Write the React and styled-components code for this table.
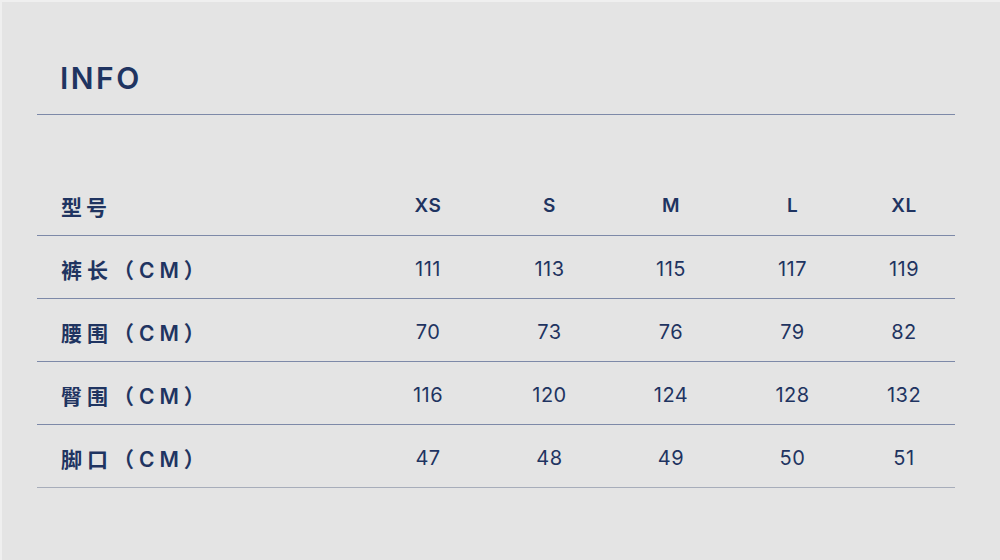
import React from 'react'
import styled, { createGlobalStyle } from 'styled-components'

const GlobalStyle = createGlobalStyle`
  html, body {
    margin: 0;
    padding: 0;
    background: #efefef;
  }
`;

const Panel = styled.section`
  box-sizing: border-box;
  width: 1000px;
  height: 560px;
  margin: 2px 0 0 2px;
  background-color: #e4e4e4;
  padding: 60px 47px 0 35px;
  color: #1f3461;
  font-family: Inter, "Noto Sans CJK SC", sans-serif;
`;

const Title = styled.h2`
  margin: 0 0 0 23px;
  height: 52px;
  font-size: 30px;
  line-height: 32px;
  font-weight: 600;
  letter-spacing: 2.5px;
`;

const Rule = styled.hr`
  margin: 0;
  border: none;
  border-top: 1px solid #7d89a8;
`;

const Table = styled.div`
  margin-top: 58px;
  display: grid;
  grid-template-columns: 330px 122px 121px 122px 121px 102px;
`;

const Cell = styled.div`
  box-sizing: border-box;
  height: 63px;
  padding-top: 3px;
  display: flex;
  align-items: center;
  justify-content: ${p => (p.$label ? 'flex-start' : 'center')};
  padding-left: ${p => (p.$label ? '24px' : '0')};
  border-bottom: 1px solid ${p => (p.$last ? '#a7adba' : '#7d89a8')};
  font-size: ${p => (p.$head ? '19px' : '20px')};
  font-weight: ${p => (p.$head ? 600 : 400)};
  letter-spacing: 0.5px;
  font-family: Inter, sans-serif;
`;

const Label = styled(Cell)`
  font-family: Inter, "Noto Sans CJK SC", sans-serif;
  font-size: 21px;
  font-weight: 600;
  letter-spacing: ${p => (p.$head ? '4px' : '5px')};
`;

const sizes = ['XS', 'S', 'M', 'L', 'XL'];

const rows = [
  { name: '裤长（CM）', values: [111, 113, 115, 117, 119] },
  { name: '腰围（CM）', values: [70, 73, 76, 79, 82] },
  { name: '臀围（CM）', values: [116, 120, 124, 128, 132] },
  { name: '脚口（CM）', values: [47, 48, 49, 50, 51] },
];

const App = () => {
  return (
    <>
      <GlobalStyle />
      <Panel>
        <Title>INFO</Title>
        <Rule />
        <Table>
          <Label $label $head>型号</Label>
          {sizes.map(s => (
            <Cell key={s} $head>{s}</Cell>
          ))}
          {rows.map((row, i) => {
            const last = i === rows.length - 1;
            return (
              <React.Fragment key={row.name}>
                <Label $label $last={last}>{row.name}</Label>
                {row.values.map((v, j) => (
                  <Cell key={j} $last={last}>{v}</Cell>
                ))}
              </React.Fragment>
            );
          })}
        </Table>
      </Panel>
    </>
  )
}

export default App
